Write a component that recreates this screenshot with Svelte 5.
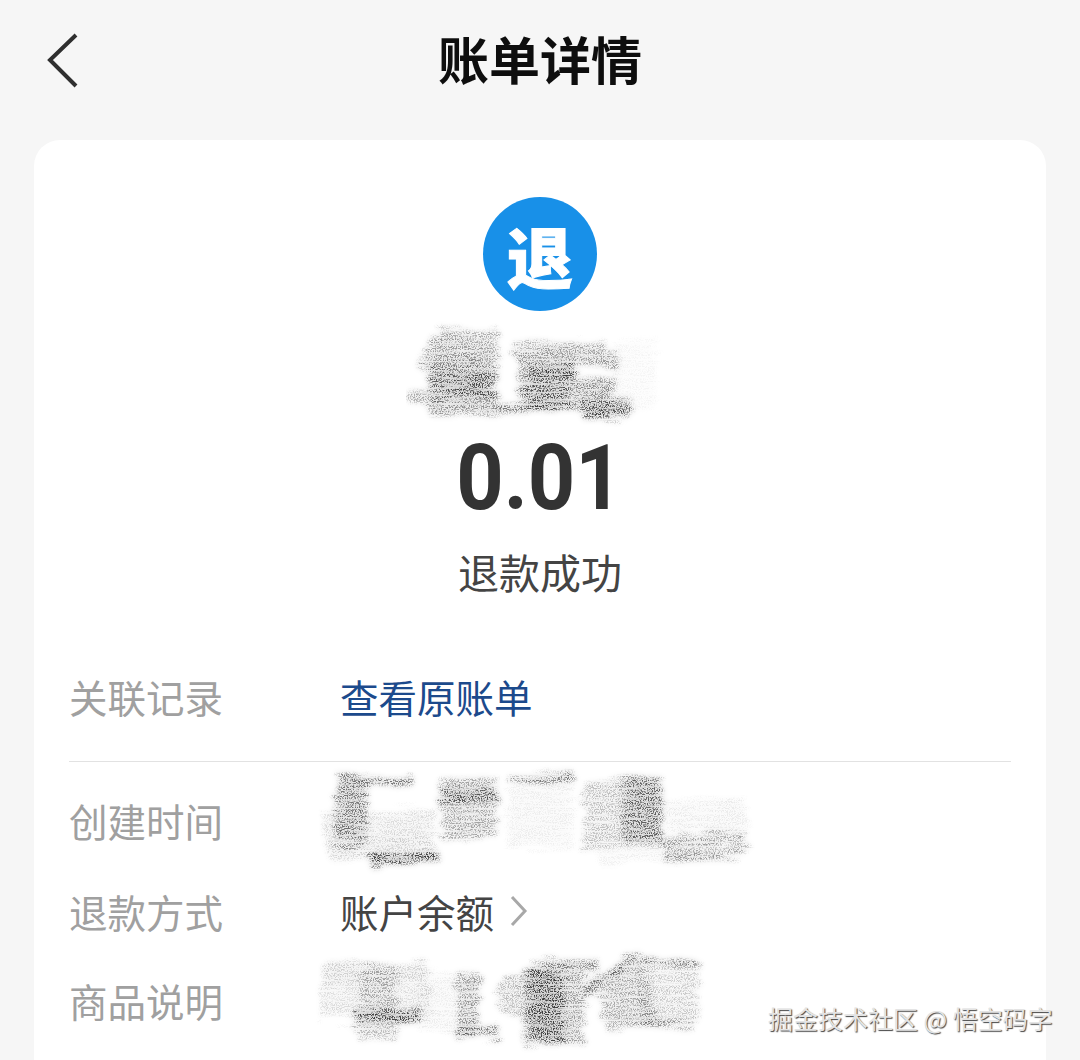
<script>
  const s1 = [
    { x: 34, y: 8, w: 58, h: 12, r: -2, o: 0.4 },
    { x: 20, y: 20, w: 70, h: 18, r: 2, o: 0.45 },
    { x: 14, y: 36, w: 78, h: 16, r: -1, o: 0.5 },
    { x: 24, y: 50, w: 66, h: 30, r: 1, o: 0.8 },
    { x: 38, y: 56, w: 44, h: 18, r: 0, o: 0.7 },
    { x: 2, y: 72, w: 90, h: 12, r: 2, o: 0.4 },
    { x: 24, y: 84, w: 70, h: 12, r: -1, o: 0.5 },
    { x: 108, y: 24, w: 92, h: 12, r: -2, o: 0.45 },
    { x: 112, y: 36, w: 100, h: 14, r: -1, o: 0.5 },
    { x: 122, y: 46, w: 46, h: 14, r: 0, o: 1 },
    { x: 112, y: 58, w: 96, h: 22, r: 1, o: 0.55 },
    { x: 118, y: 62, w: 44, h: 30, r: 0, o: 0.75 },
    { x: 90, y: 84, w: 130, h: 7, r: -1, o: 0.65 },
    { x: 118, y: 82, w: 56, h: 10, r: 0, o: 1 },
    { x: 178, y: 82, w: 44, h: 16, r: 3, o: 0.9 },
    { x: 210, y: 20, w: 40, h: 70, r: 0, o: 0.05 }
  ];
  const s2 = [
    { x: 19, y: 9, w: 76, h: 9, r: -2, o: 0.7 },
    { x: 17, y: 18, w: 32, h: 61, r: 0, o: 0.65 },
    { x: 5, y: 45, w: 112, h: 26, r: -1, o: 0.14 },
    { x: 10, y: 70, w: 105, h: 22, r: -2, o: 0.18 },
    { x: 52, y: 88, w: 67, h: 9, r: -4, o: 1 },
    { x: 124, y: 12, w: 54, h: 62, r: -1, o: 0.42 },
    { x: 125, y: 23, w: 50, h: 13, r: -2, o: 0.75 },
    { x: 189, y: 9, w: 66, h: 6, r: -2, o: 0.65 },
    { x: 189, y: 18, w: 66, h: 64, r: 0, o: 0.08 },
    { x: 265, y: 13, w: 78, h: 68, r: -2, o: 0.28 },
    { x: 305, y: 14, w: 39, h: 60, r: 0, o: 0.7 },
    { x: 344, y: 68, w: 85, h: 12, r: -5, o: 0.5 },
    { x: 346, y: 82, w: 84, h: 12, r: -5, o: 0.5 },
    { x: 349, y: 33, w: 80, h: 30, r: -3, o: 0.09 },
    { x: 282, y: 84, w: 70, h: 14, r: -2, o: 0.07 }
  ];
  const s3 = [
    { x: 4, y: 18, w: 106, h: 22, r: -1, o: 0.2 },
    { x: 2, y: 40, w: 110, h: 36, r: 0, o: 0.14 },
    { x: 42, y: 22, w: 37, h: 74, r: 0, o: 0.32 },
    { x: 35, y: 64, w: 67, h: 14, r: -1, o: 0.95 },
    { x: 102, y: 28, w: 40, h: 60, r: 0, o: 0.08 },
    { x: 140, y: 32, w: 20, h: 60, r: 0, o: 0.5 },
    { x: 137, y: 81, w: 46, h: 13, r: 1, o: 0.7 },
    { x: 180, y: 30, w: 26, h: 42, r: 0, o: 0.3 },
    { x: 218, y: 14, w: 60, h: 12, r: 0, o: 0.55 },
    { x: 205, y: 24, w: 62, h: 76, r: 0, o: 0.45 },
    { x: 210, y: 24, w: 36, h: 74, r: 0, o: 1 },
    { x: 258, y: 26, w: 70, h: 8, r: -35, o: 0.65 },
    { x: 282, y: 22, w: 50, h: 62, r: -15, o: 0.4 },
    { x: 322, y: 16, w: 58, h: 62, r: 0, o: 0.24 },
    { x: 326, y: 16, w: 54, h: 5, r: -1, o: 0.55 },
    { x: 310, y: 76, w: 66, h: 6, r: -3, o: 0.6 }
  ];
  const rows = [
    { id: 'a', w: 262, h: 108, data: s1 },
    { id: 'b', w: 444, h: 108, data: s2 },
    { id: 'c', w: 410, h: 112, data: s3 }
  ];
  const pick = (id) => rows.find((r) => r.id === id);
</script>

{#snippet scribble(item, cls)}
  <svg class={cls} width={item.w} height={item.h} viewBox="0 0 {item.w} {item.h}" aria-hidden="true">
    <defs>
      <filter id="pencil-{item.id}" filterUnits="userSpaceOnUse" x="-10" y="-10" width={item.w + 20} height={item.h + 20}>
        <feTurbulence type="fractalNoise" baseFrequency="0.02 0.22" numOctaves="2" seed="4" result="warp" />
        <feDisplacementMap in="SourceGraphic" in2="warp" scale="22" xChannelSelector="R" yChannelSelector="G" result="rough" />
        <feGaussianBlur in="rough" stdDeviation="1.4" result="soft" />
        <feTurbulence type="fractalNoise" baseFrequency="0.85" numOctaves="2" seed="7" result="noise" />
        <feColorMatrix in="noise" type="matrix" values="0 0 0 0 0 0 0 0 0 0 0 0 0 0 0 0 0 0 6 -2.7" result="grain" />
        <feTurbulence type="fractalNoise" baseFrequency="0.03 0.45" numOctaves="2" seed="11" result="streakNoise" />
        <feColorMatrix in="streakNoise" type="matrix" values="0 0 0 0 0 0 0 0 0 0 0 0 0 0 0 0 0 0 4 -1.1" result="streak" />
        <feComposite in="soft" in2="grain" operator="in" result="grainy" />
        <feComposite in="grainy" in2="streak" operator="in" result="marks" />
        <feGaussianBlur in="marks" stdDeviation="0.4" result="marksSoft" />
        <feGaussianBlur in="rough" stdDeviation="3" result="haze" />
        <feComponentTransfer in="haze" result="hazeSoft">
          <feFuncA type="linear" slope="0.2" />
        </feComponentTransfer>
        <feMerge>
          <feMergeNode in="hazeSoft" />
          <feMergeNode in="marksSoft" />
        </feMerge>
      </filter>
    </defs>
    <g filter="url(#pencil-{item.id})">
      {#each item.data as d}
        <rect
          x={d.x}
          y={d.y}
          width={d.w}
          height={d.h}
          fill="#3c3c3c"
          opacity={d.o}
          transform="rotate({d.r} {d.x + d.w / 2} {d.y + d.h / 2})"
        />
      {/each}
    </g>
  </svg>
{/snippet}

<div class="page">
  <header class="top">
    <svg class="back" width="40" height="60" viewBox="0 0 40 60" aria-hidden="true">
      <path d="M33 5 L7 30 L33 56" />
    </svg>
    <h1>账单详情</h1>
  </header>

  <main class="card">
    <section class="hero">
      <div class="badge">退</div>
      {@render scribble(pick('a'), 'name')}
      <div class="amount">0.01</div>
      <div class="status">退款成功</div>
    </section>

    <section class="group first">
      <div class="row">
        <span class="label">关联记录</span>
        <span class="link">查看原账单</span>
      </div>
    </section>

    <section class="group">
      <div class="row tall">
        <span class="label">创建时间</span>
        {@render scribble(pick('b'), 'mask')}
      </div>
      <div class="row method">
        <span class="label">退款方式</span>
        <span class="value">账户余额
          <svg class="chev" width="18" height="32" viewBox="0 0 18 32" aria-hidden="true">
            <path d="M2 2 L15 16 L2 30" />
          </svg>
        </span>
      </div>
      <div class="row tall last">
        <span class="label">商品说明</span>
        {@render scribble(pick('c'), 'mask')}
      </div>
    </section>
  </main>

  <div class="mark">掘金技术社区 @ 悟空码字</div>
</div>

<style>
  :global(body) {
    margin: 0;
    background: #f6f6f6;
  }

  .page {
    position: relative;
    height: 1060px;
    overflow: hidden;
    background: #f6f6f6;
    font-family: "Noto Sans CJK SC", "Noto Sans", sans-serif;
  }

  .top {
    position: relative;
    height: 140px;
    display: flex;
    align-items: center;
    justify-content: center;
    box-sizing: border-box;
    padding-bottom: 24px;
  }

  .back {
    position: absolute;
    left: 43px;
    top: 30px;
  }

  .back path {
    fill: none;
    stroke: #2f2f2f;
    stroke-width: 4;
  }

  h1 {
    margin: 0;
    font-size: 51px;
    font-weight: 700;
    line-height: 60px;
    color: #0e0e0e;
  }

  .card {
    margin: 0 34px;
    box-sizing: border-box;
    height: 960px;
    padding: 57px 35px 0;
    background: #fff;
    border-radius: 26px;
  }

  .hero {
    display: flex;
    flex-direction: column;
    align-items: center;
  }

  .badge {
    width: 114px;
    height: 114px;
    border-radius: 50%;
    background: #1890e8;
    color: #fff;
    font-size: 66px;
    font-weight: 900;
    line-height: 114px;
    text-align: center;
    -webkit-text-stroke: 1px #fff;
  }

  .name {
    display: block;
    margin: 8px 0 0 -6px;
  }

  .amount {
    margin-top: 1px;
    font-family: Roboto, sans-serif;
    font-size: 91px;
    font-weight: 700;
    line-height: 100px;
    transform: scaleX(0.91);
    color: #333;
  }

  .status {
    margin-top: 13px;
    font-size: 41px;
    line-height: 60px;
    color: #444;
  }

  .group.first {
    margin-top: 65px;
    padding-bottom: 35px;
    border-bottom: 1px solid #e2e2e2;
  }

  .row {
    display: grid;
    grid-template-columns: 271px 1fr;
    align-items: center;
    height: 60px;
    font-size: 38.5px;
    line-height: 60px;
  }

  .row.tall {
    height: 120px;
    margin-top: -2px;
  }

  .row.method {
    height: 62px;
  }

  .row.last {
    margin-top: -2px;
  }

  .label {
    color: #a0a0a0;
  }

  .link {
    color: #1c4a8c;
  }

  .value {
    display: flex;
    align-items: center;
    gap: 16px;
    color: #444;
  }

  .chev path {
    fill: none;
    stroke: #a8a8a8;
    stroke-width: 3;
  }

  .mask {
    display: block;
    margin-left: -22px;
    overflow: visible;
  }

  .mark {
    position: absolute;
    left: 768px;
    top: 1000px;
    font-size: 25px;
    line-height: 36px;
    white-space: nowrap;
    color: #e4e4e4;
    text-shadow: 1px 1px 1px #444;
  }
</style>
